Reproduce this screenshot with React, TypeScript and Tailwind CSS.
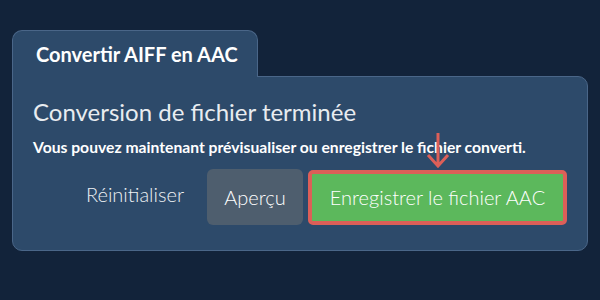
import React from "react";

export default function App() {
  return (
    <div
      className="w-[600px] h-[300px] bg-[#12233a] pt-[30px] px-[12px]"
      style={{ fontFamily: "Lato, 'Noto Sans', sans-serif" }}
    >
      <div className="relative z-10 -mb-px flex h-[47px] w-[246px] items-center rounded-t-[10px] border border-b-0 border-[#4a6688] bg-[#2d4a6a] pl-[23px] text-[20px] font-bold text-white">
        Convertir AIFF en AAC
      </div>
      <div className="h-[175px] rounded-b-[10px] rounded-tr-[10px] border border-[#4a6688] bg-[#2d4a6a] px-[20px] pt-[20px]">
        <h1 className="text-[24px] leading-[30px] text-[#e8ecf0]">Conversion de fichier terminée</h1>
        <p className="mt-[10px] text-[15.7px] font-bold leading-[20px] text-white">
          Vous pouvez maintenant prévisualiser ou enregistrer le fichier converti.
        </p>
        <div className="mt-[12px] flex items-center justify-end">
          <button className="mr-[23px] -mt-[7px] text-[20px] font-light text-[#eef1f4]">Réinitialiser</button>
          <button className="h-[56px] w-[96px] rounded-[6px] bg-[#4e5e6e] text-[20px] font-light text-white">Aperçu</button>
          <div className="relative ml-[5px]">
            <svg className="absolute left-[118px] -top-[38px]" width="24" height="36" viewBox="0 0 24 36">
              <path d="M12 1 V34 M2 23 L12 34 L22 23" fill="none" stroke="#dc5f58" strokeWidth="3" />
            </svg>
            <button className="h-[55px] w-[259px] rounded-[5px] border-[4px] border-[#dc5f58] bg-[#5cb85c] text-[20px] font-light text-white">
              Enregistrer le fichier AAC
            </button>
          </div>
        </div>
      </div>
    </div>
  );
}
